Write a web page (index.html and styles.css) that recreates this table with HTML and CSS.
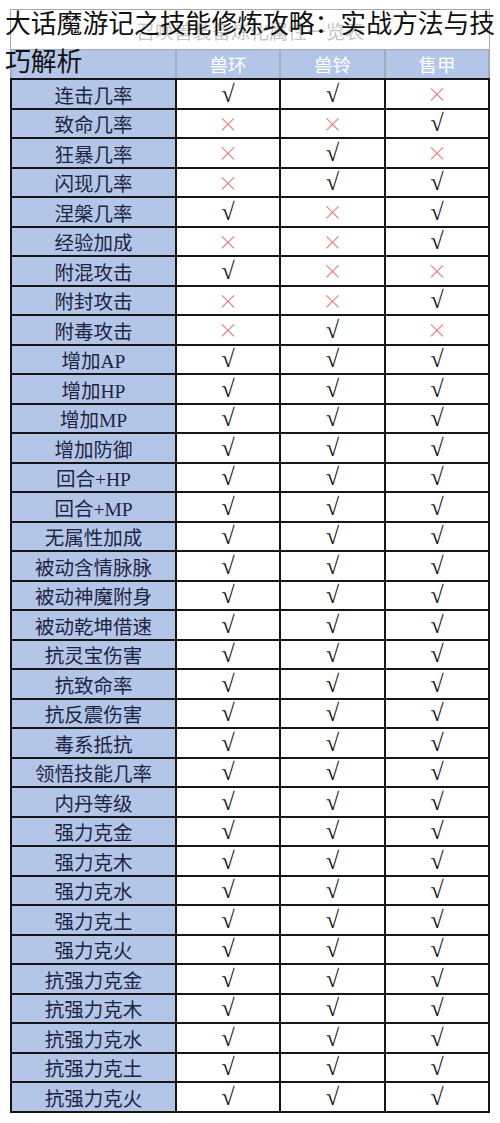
FILE: index.html
```html
<!DOCTYPE html>
<html lang="zh-CN">
<head>
<meta charset="utf-8">
<title>大话魔游记之技能修炼攻略：实战方法与技巧解析</title>
<link rel="stylesheet" href="styles.css">
</head>
<body>
<div class="page">
  <div class="sheet">
    <div class="caption">召唤兽装备炼化属性一览表</div>
    <div class="head">
      <div class="hc"></div><div class="hc">兽环</div><div class="hc">兽铃</div><div class="hc">售甲</div>
    </div>
    <div class="rows">
      <div class="lbl">连击几率</div><div class="c">√</div><div class="c">√</div><div class="x">×</div>
      <div class="lbl">致命几率</div><div class="x">×</div><div class="x">×</div><div class="c">√</div>
      <div class="lbl">狂暴几率</div><div class="x">×</div><div class="c">√</div><div class="x">×</div>
      <div class="lbl">闪现几率</div><div class="x">×</div><div class="c">√</div><div class="c">√</div>
      <div class="lbl">涅槃几率</div><div class="c">√</div><div class="x">×</div><div class="c">√</div>
      <div class="lbl">经验加成</div><div class="x">×</div><div class="x">×</div><div class="c">√</div>
      <div class="lbl">附混攻击</div><div class="c">√</div><div class="x">×</div><div class="x">×</div>
      <div class="lbl">附封攻击</div><div class="x">×</div><div class="x">×</div><div class="c">√</div>
      <div class="lbl">附毒攻击</div><div class="x">×</div><div class="c">√</div><div class="x">×</div>
      <div class="lbl">增加AP</div><div class="c">√</div><div class="c">√</div><div class="c">√</div>
      <div class="lbl">增加HP</div><div class="c">√</div><div class="c">√</div><div class="c">√</div>
      <div class="lbl">增加MP</div><div class="c">√</div><div class="c">√</div><div class="c">√</div>
      <div class="lbl">增加防御</div><div class="c">√</div><div class="c">√</div><div class="c">√</div>
      <div class="lbl">回合+HP</div><div class="c">√</div><div class="c">√</div><div class="c">√</div>
      <div class="lbl">回合+MP</div><div class="c">√</div><div class="c">√</div><div class="c">√</div>
      <div class="lbl">无属性加成</div><div class="c">√</div><div class="c">√</div><div class="c">√</div>
      <div class="lbl">被动含情脉脉</div><div class="c">√</div><div class="c">√</div><div class="c">√</div>
      <div class="lbl">被动神魔附身</div><div class="c">√</div><div class="c">√</div><div class="c">√</div>
      <div class="lbl">被动乾坤借速</div><div class="c">√</div><div class="c">√</div><div class="c">√</div>
      <div class="lbl">抗灵宝伤害</div><div class="c">√</div><div class="c">√</div><div class="c">√</div>
      <div class="lbl">抗致命率</div><div class="c">√</div><div class="c">√</div><div class="c">√</div>
      <div class="lbl">抗反震伤害</div><div class="c">√</div><div class="c">√</div><div class="c">√</div>
      <div class="lbl">毒系抵抗</div><div class="c">√</div><div class="c">√</div><div class="c">√</div>
      <div class="lbl">领悟技能几率</div><div class="c">√</div><div class="c">√</div><div class="c">√</div>
      <div class="lbl">内丹等级</div><div class="c">√</div><div class="c">√</div><div class="c">√</div>
      <div class="lbl">强力克金</div><div class="c">√</div><div class="c">√</div><div class="c">√</div>
      <div class="lbl">强力克木</div><div class="c">√</div><div class="c">√</div><div class="c">√</div>
      <div class="lbl">强力克水</div><div class="c">√</div><div class="c">√</div><div class="c">√</div>
      <div class="lbl">强力克土</div><div class="c">√</div><div class="c">√</div><div class="c">√</div>
      <div class="lbl">强力克火</div><div class="c">√</div><div class="c">√</div><div class="c">√</div>
      <div class="lbl">抗强力克金</div><div class="c">√</div><div class="c">√</div><div class="c">√</div>
      <div class="lbl">抗强力克木</div><div class="c">√</div><div class="c">√</div><div class="c">√</div>
      <div class="lbl">抗强力克水</div><div class="c">√</div><div class="c">√</div><div class="c">√</div>
      <div class="lbl">抗强力克土</div><div class="c">√</div><div class="c">√</div><div class="c">√</div>
      <div class="lbl">抗强力克火</div><div class="c">√</div><div class="c">√</div><div class="c">√</div>
    </div>
  </div>
  <h1 class="title">大话魔游记之技能修炼攻略：实战方法与技巧解析</h1>
</div>
</body>
</html>
```

FILE: styles.css
```css
html, body {
  margin: 0;
  padding: 0;
  background: #ffffff;
}

.page {
  position: relative;
  width: 500px;
  height: 1123px;
  overflow: hidden;
}

.sheet {
  margin: 9px 0 0 10px;
  width: 480px;
  font-family: "Liberation Serif", "Noto Sans CJK SC", serif;
}

.caption {
  box-sizing: border-box;
  height: 40px;
  border: 1px solid #a8a8a8;
  border-bottom: none;
  display: flex;
  align-items: center;
  justify-content: center;
  padding-top: 2px;
  color: #c6c6c6;
  font-size: 19px;
}

.head {
  display: grid;
  grid-template-columns: 163px 102px 103px 102px;
  column-gap: 2px;
  padding: 1px 2px 0 2px;
  background: #a3acbd;
  height: 29px;
  box-sizing: border-box;
}

.hc {
  background: #b4c6e7;
  color: #ffffff;
  font-size: 18.5px;
  display: flex;
  align-items: center;
  justify-content: center;
}

.rows {
  display: grid;
  grid-template-columns: 163px 102px 103px 102px;
  grid-auto-rows: 27.5px;
  gap: 2px;
  padding: 2px;
  background: #161616;
}

.rows > div {
  display: flex;
  align-items: center;
  justify-content: center;
  background: #ffffff;
}

.rows > .lbl {
  background: #b4c6e7;
  color: #1d2443;
  font-size: 19.5px;
  padding-top: 1px;
}

.rows > .c {
  color: #111111;
  font-size: 24px;
  line-height: 1;
  font-family: "Liberation Serif", serif;
}

.rows > .x {
  color: #e27676;
  font-size: 20px;
  font-family: "Noto Sans CJK SC", sans-serif;
  font-weight: 300;
}

.title {
  position: absolute;
  top: 3px;
  left: 5px;
  width: 495px;
  margin: 0;
  font-family: "Noto Sans CJK SC", sans-serif;
  font-weight: 400;
  font-size: 25.8px;
  line-height: 38px;
  color: #111111;
}
```
